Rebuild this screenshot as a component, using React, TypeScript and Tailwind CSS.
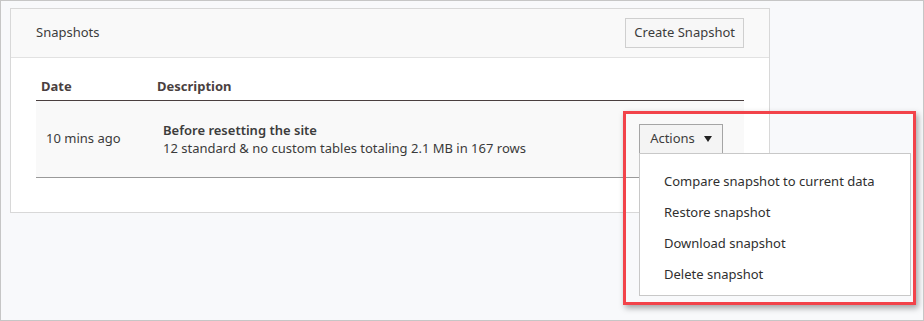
const MENU = [
  "Compare snapshot to current data",
  "Restore snapshot",
  "Download snapshot",
  "Delete snapshot",
];

export default function App() {
  return (
    <div
      className="w-[924px] h-[321px] overflow-hidden border border-[#c6c6c6] bg-[#f8f9fb] pl-[9px] pt-[7px] text-[13px] text-[#3b3b3b]"
      style={{ fontFamily: '"Noto Sans", "Open Sans", sans-serif' }}
    >
      <div className="w-[760px] h-[205px] border border-[#d8d8d8] bg-white">
        {/* header */}
        <div className="h-[49px] flex items-center justify-between pl-[25px] pr-[25px] bg-[#f9f9f9] border-b border-[#e2e2e2]">
          <span className="text-[#3c3c3c] pb-[1px]">Snapshots</span>
          <button className="h-[30px] px-[8px] border border-[#cfcfcf] bg-[#f7f7f7] text-[#3c3c3c]">
            Create Snapshot
          </button>
        </div>

        {/* table */}
        <div className="px-[25px] pt-[17px]">
          <div className="flex h-[26px] items-center pb-[2px] border-b border-[#4a3f3f] font-bold text-[#4a3f3f]">
            <div className="w-[116px] pl-[5px]">Date</div>
            <div className="pl-[5px]">Description</div>
          </div>
          <div className="flex h-[77px] items-center bg-[#f9f9f9] border-b border-[#9a9a9a]">
            <div className="w-[116px] pl-[10px] pb-[1px]">10 mins ago</div>
            <div className="flex-1 pl-[11px] pb-[1px] leading-[18px]">
              <div className="font-semibold text-[#3c3c3c]">Before resetting the site</div>
              <div>12 standard &amp; no custom tables totaling 2.1 MB in 167 rows</div>
            </div>
            <div className="relative mr-[21px] mb-[1px]">
              <button className="h-[30px] w-[84px] flex items-center justify-center gap-[9px] border border-[#a5a5a5] bg-[#f4f4f4] text-[#3c3c3c]">
                <span>Actions</span>
                <svg width="8" height="6" viewBox="0 0 8 6" className="mt-[1px]">
                  <path d="M0 0h8L4 6z" fill="#222" />
                </svg>
              </button>
              <div className="absolute left-0 top-[29px] w-[272px] h-[143px] border border-[#c8c8c8] bg-white pt-[13px] z-10">
                {MENU.map((m) => (
                  <div key={m} className="h-[31px] flex items-center pl-[24px] text-[#2f2f2f]">
                    {m}
                  </div>
                ))}
              </div>
              <div className="absolute left-[-16px] top-[-13px] w-[293px] h-[194px] border-[3px] border-[#f2434a] shadow-[2px_3px_6px_rgba(0,0,0,0.35)] z-20 pointer-events-none" />
            </div>
          </div>
        </div>
      </div>
    </div>
  );
}
